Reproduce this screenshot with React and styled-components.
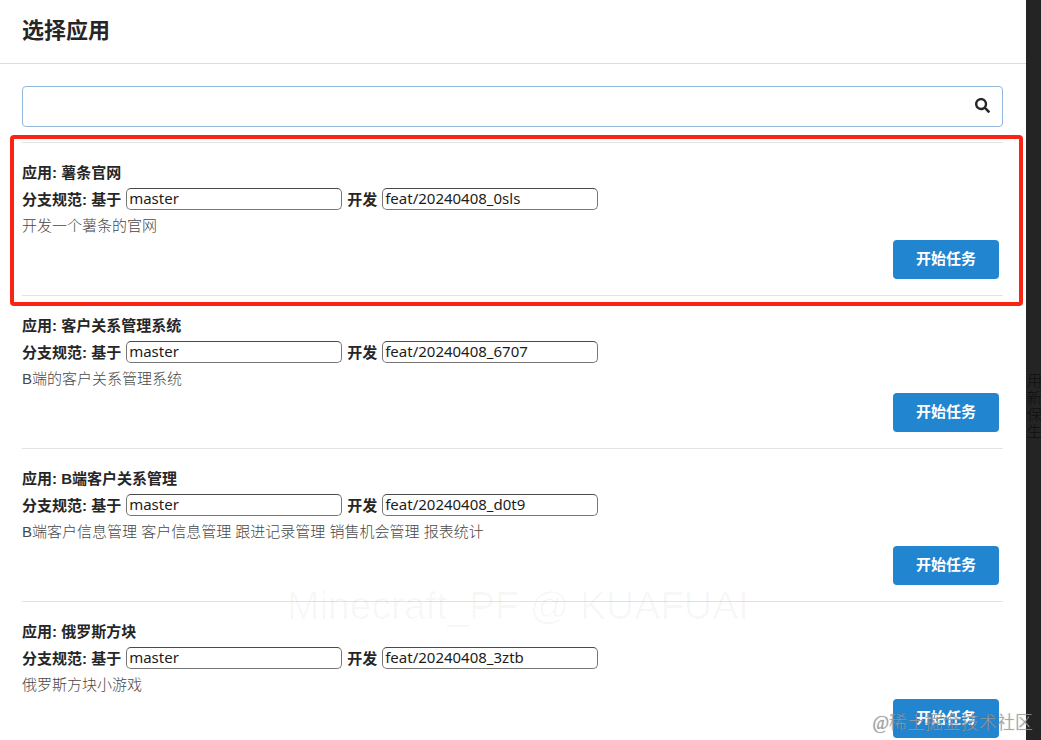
import React from "react";
import styled, { createGlobalStyle } from "styled-components";
import { FaSearch } from "react-icons/fa";

const GlobalStyle = createGlobalStyle`
  * { box-sizing: border-box; }
  body {
    margin: 0;
    background: #242424;
    color: #262626;
    font-family: "Liberation Sans", "Noto Sans CJK SC", sans-serif;
    font-size: 15px;
    line-height: 27px;
  }
`;

const Page = styled.div`
  position: relative;
  display: flex;
  height: 100vh;
  overflow: hidden;
`;

const Modal = styled.main`
  position: relative;
  flex: 1;
  min-width: 0;
  background: #fff;
`;

const Backdrop = styled.aside`
  width: 15px;
  padding: 372px 0 0 1px;
  overflow: hidden;
  white-space: nowrap;
  background: #242424;
  color: #101010;
  font-size: 15px;
  font-weight: 300;
  line-height: 17px;
`;

const Header = styled.header`
  height: 64px;
  padding: 15px 22px;
  border-bottom: 1px solid #dcdddd;
`;

const Title = styled.h1`
  margin: 0;
  font-size: 22px;
  line-height: 32px;
`;

const Content = styled.div`
  padding: 22px 23px 0 22px;
`;

const SearchBox = styled.form`
  display: flex;
  align-items: center;
  height: 41px;
  margin-bottom: 15px;
  padding-right: 12px;
  border: 1px solid #92b7dc;
  border-radius: 4px;
`;

const SearchInput = styled.input`
  flex: 1;
  min-width: 0;
  height: 100%;
  padding: 0 14px;
  border: 0;
  outline: 0;
  background: transparent;
  font: inherit;
`;

const SearchButton = styled.button`
  display: flex;
  padding: 0 0 2px;
  border: 0;
  background: none;
  color: #262626;
  font-size: 15px;
`;

const AppList = styled.ul`
  margin: 0;
  padding: 0;
  list-style: none;
`;

const AppRow = styled.li`
  position: relative;
  display: flex;
  flex-direction: column;
  padding: 16px 4px 16px 0;
  border-top: 1px solid #e2e3e4;
`;

const Highlight = styled.span`
  position: absolute;
  inset: -8px -20px -11px -12px;
  border: 4px solid #fa2314;
  border-radius: 4px;
  pointer-events: none;
`;

const AppName = styled.h2`
  margin: 0;
  font-size: 15px;
  line-height: 27px;
`;

const Branches = styled.div`
  display: flex;
  align-items: center;
  gap: 5px;
  height: 26px;
`;

const BranchLabel = styled.label`
  font-weight: 700;
  white-space: nowrap;
`;

const BranchInput = styled.input`
  width: 216px;
  height: 22px;
  padding: 0 2px 2px;
  border: 1px solid #767676;
  border-top-color: #4a4a4a;
  border-radius: 5px;
  background: #fff;
  color: #1c1c1c;
  font-family: "Noto Sans", sans-serif;
  font-size: 15px;
`;

const Description = styled.p`
  margin: 0 0 1px;
  color: #484848;
  font-weight: 300;
`;

const StartButton = styled.button`
  align-self: flex-end;
  width: 106px;
  height: 39px;
  padding: 0 0 2px;
  border: 0;
  border-radius: 4px;
  background: #2185d0;
  color: #fff;
  font: inherit;
  font-weight: 700;
`;

const UserMark = styled.div`
  position: absolute;
  right: 0;
  bottom: 112px;
  left: 10px;
  color: rgba(0, 0, 0, 0.03);
  font-size: 39px;
  line-height: 44px;
  text-align: center;
  pointer-events: none;
`;

const SiteMark = styled.div`
  position: absolute;
  right: 8px;
  bottom: 3px;
  color: rgba(160, 160, 160, 0.85);
  font-family: "Liberation Serif", "Noto Sans CJK SC", serif;
  font-size: 18px;
  font-weight: 300;
  text-shadow: 0 0 1px rgba(90, 90, 90, 0.6);
  pointer-events: none;
`;

const apps = [
  { name: "薯条官网", branch: "feat/20240408_0sls", text: "开发一个薯条的官网", highlighted: true },
  { name: "客户关系管理系统", branch: "feat/20240408_6707", text: "B端的客户关系管理系统" },
  { name: "B端客户关系管理", branch: "feat/20240408_d0t9", text: "B端客户信息管理 客户信息管理 跟进记录管理 销售机会管理 报表统计" },
  { name: "俄罗斯方块", branch: "feat/20240408_3ztb", text: "俄罗斯方块小游戏" },
];

function AppItem({ app, id }) {
  return (
    <AppRow>
      <AppName>应用: {app.name}</AppName>
      <Branches>
        <BranchLabel htmlFor={`base-${id}`}>分支规范: 基于</BranchLabel>
        <BranchInput id={`base-${id}`} defaultValue="master" />
        <BranchLabel htmlFor={`dev-${id}`}>开发</BranchLabel>
        <BranchInput id={`dev-${id}`} defaultValue={app.branch} />
      </Branches>
      <Description>{app.text}</Description>
      <StartButton type="button">开始任务</StartButton>
      {app.highlighted && <Highlight />}
    </AppRow>
  );
}

export default function App() {
  return (
    <Page>
      <GlobalStyle />
      <Modal>
        <Header>
          <Title>选择应用</Title>
        </Header>
        <Content>
          <SearchBox onSubmit={(e) => e.preventDefault()}>
            <SearchInput type="text" aria-label="搜索" />
            <SearchButton type="submit" aria-label="搜索">
              <FaSearch />
            </SearchButton>
          </SearchBox>
          <AppList>
            {apps.map((app, i) => (
              <AppItem key={app.name} app={app} id={i} />
            ))}
          </AppList>
        </Content>
        <UserMark>Minecraft_PF @ KUAFUAI</UserMark>
      </Modal>
      <Backdrop>
        <div>用</div>
        <div>新</div>
        <div>保</div>
        <div>生</div>
      </Backdrop>
      <SiteMark>@稀土掘金技术社区</SiteMark>
    </Page>
  );
}
